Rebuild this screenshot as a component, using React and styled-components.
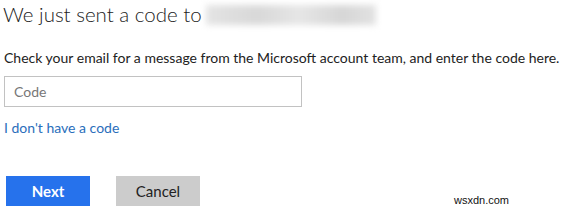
import React from "react";
import styled, { createGlobalStyle } from "styled-components";

const Global = createGlobalStyle`
  html, body { margin: 0; padding: 0; background: #fff; }
  body { font-family: Lato, "Liberation Sans", sans-serif; color: #222; }
`;

const Page = styled.div`
  position: relative;
  width: 565px;
  height: 212px;
  overflow: hidden;
  padding: 0 0 0 4px;
  box-sizing: border-box;
  display: flex;
  flex-direction: column;
`;

const Heading = styled.h1`
  margin: 0 0 0 -1px;
  font-size: 20.5px;
  font-weight: 300;
  line-height: 28px;
  color: #222;
  display: flex;
  align-items: center;
  gap: 4px;
  white-space: nowrap;
`;

const Redacted = styled.span`
  display: inline-block;
  width: 170px;
  height: 20px;
  background: linear-gradient(90deg, #e4e4e4, #d8d8d8 30%, #e6e6e6 55%, #d6d6d6 80%, #e2e2e2);
  filter: blur(3px);
  margin-top: 2px;
`;

const Message = styled.p`
  margin: 20px 0 0 0;
  font-size: 14px;
  line-height: 20px;
  color: #222;
  white-space: nowrap;
`;

const CodeInput = styled.input`
  margin-top: 8px;
  width: 298px;
  height: 31px;
  box-sizing: border-box;
  border: 1px solid #c2c2c2;
  padding: 0 9px;
  font-family: inherit;
  font-size: 14px;
  color: #222;
  outline: none;
  &::placeholder { color: #777; }
`;

const Link = styled.a`
  margin-top: 11px;
  font-size: 14px;
  line-height: 20px;
  color: #2a6ebb;
  text-decoration: none;
  align-self: flex-start;
`;

const Actions = styled.div`
  margin-top: 38px;
  margin-left: 2px;
  display: flex;
  gap: 26px;
`;

const Button = styled.button`
  width: 84px;
  height: 30px;
  border: none;
  font-family: inherit;
  font-size: 15px;
  font-weight: ${(p) => (p.$primary ? 700 : 400)};
  background: ${(p) => (p.$primary ? "#2672ec" : "#cccccc")};
  color: ${(p) => (p.$primary ? "#fff" : "#222")};
  padding: 0;
`;

const Watermark = styled.span`
  position: absolute;
  left: 454px;
  top: 194px;
  font-family: "Liberation Sans", sans-serif;
  font-size: 11px;
  color: #111;
`;

export default function App() {
  return (
    <>
      <Global />
      <Page>
        <Heading>
          We just sent a code to <Redacted />
        </Heading>
        <Message>
          Check your email for a message from the Microsoft account team, and enter the code here.
        </Message>
        <CodeInput placeholder="Code" />
        <Link href="#">I don't have a code</Link>
        <Actions>
          <Button $primary>Next</Button>
          <Button>Cancel</Button>
        </Actions>
        <Watermark>wsxdn.com</Watermark>
      </Page>
    </>
  );
}
